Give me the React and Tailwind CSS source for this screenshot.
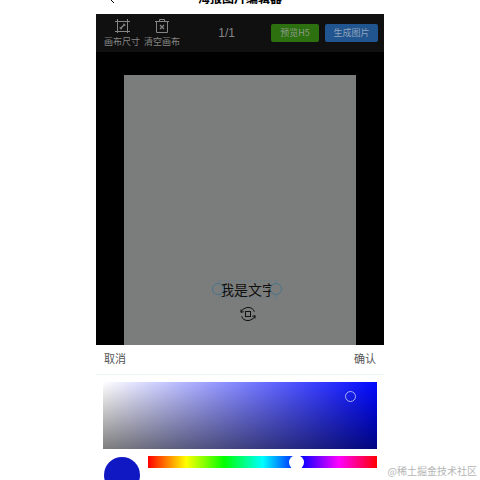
import React, { useState } from 'react';

const CropIcon = () => (
  <svg className="h-4 w-4" viewBox="0 0 16 16" fill="none" stroke="currentColor" aria-hidden="true">
    <path d="M3.5 1v14M13.5 1v14M1 3.5h15M1 13.5h15" />
    <path d="M6.5 10.5l4-4" strokeWidth="1.3" />
    <path d="M9 6.2h1.8V8M6.2 9v1.8H8" />
  </svg>
);

const ClearIcon = () => (
  <svg className="h-4 w-4" viewBox="0 0 16 16" fill="none" stroke="currentColor" aria-hidden="true">
    <path d="M2.5 3.5h11v11h-11zM1 3.5h14M5.5 3.5v-2h5v2" />
    <path d="M6 7l4 4M10 7l-4 4" strokeWidth="1.3" />
  </svg>
);

const RotateIcon = () => (
  <svg className="h-4 w-4" viewBox="0 0 16 16" fill="none" stroke="currentColor" aria-hidden="true">
    <path d="M4 2.8C6.5 1 9.5 1 12 2.5c1.3.9 2 2 2.3 3.3M12 13.2c-2.5 1.8-5.5 1.8-8 .3-1.3-.9-2-2-2.3-3.3" />
    <path d="M1 6.3C1.4 4.5 2.5 3.5 4 2.8M1 3.5v2.8l2.8-.6M15 9.7c-.4 1.8-1.5 2.8-3 3.5M15 12.5V9.7l-2.8.6" />
    <rect x="5.5" y="5.5" width="5" height="5" />
  </svg>
);

const Toolbar = () => (
  <div className="flex h-[38px] shrink-0 items-center bg-[#101010] pl-2 pr-1.5 text-[#858585]">
    <div className="flex flex-1 gap-1">
      <button type="button" className="flex flex-col items-center gap-0.5 whitespace-nowrap text-[9px] leading-3">
        <CropIcon />
        画布尺寸
      </button>
      <button type="button" className="flex flex-col items-center gap-0.5 whitespace-nowrap text-[9px] leading-3">
        <ClearIcon />
        清空画布
      </button>
    </div>
    <span className="pr-9 font-['Liberation_Sans',sans-serif] text-xs">1/1</span>
    <div className="flex justify-end gap-1.5 text-[9px] text-[#8f9b8b]">
      <button type="button" className="h-[18px] w-12 whitespace-nowrap rounded-xs bg-[#2c700f]">
        预览H5
      </button>
      <button type="button" className="h-[18px] w-[53px] whitespace-nowrap rounded-xs bg-[#215590] text-[#8fa3ba]">
        生成图片
      </button>
    </div>
  </div>
);

const Canvas = () => (
  <div className="h-[293px] shrink-0 bg-black px-7 pt-[23px]">
    <div className="flex h-full flex-col items-center bg-[#7b7d7c] pt-[205px] text-[#101010]">
      <div className="relative ml-4 border border-dashed border-[#6a7d86] text-sm leading-4">
        我是文字
        <span className="absolute -left-2 top-0.5 h-3 w-3 rounded-full border border-[#48748c] bg-[#7b7d7c]" />
        <span className="absolute -right-1.5 top-0.5 h-3 w-3 rounded-full border border-[#48748c] bg-[#7b7d7c]" />
      </div>
      <button type="button" aria-label="旋转" className="ml-4 mt-2">
        <RotateIcon />
      </button>
    </div>
  </div>
);

const ColorPicker = () => {
  const [hue, setHue] = useState(238);

  return (
    <div className="shrink-0 bg-white">
      <div className="flex h-[30px] items-center justify-between border-b border-[#edf2f2] px-2 pb-0.5 text-[11px] text-[#555]">
        <button type="button">取消</button>
        <button type="button">确认</button>
      </div>
      <div className="p-[7px]">
        <div className="relative h-[67px] bg-[linear-gradient(to_right,#fff,#0008ff)]">
          <div className="h-full bg-[linear-gradient(to_bottom,transparent,rgba(0,0,0,0.5))]" />
          <span className="absolute right-[21px] top-[9px] h-[11px] w-[11px] rounded-full border border-[#aab0f5]" />
        </div>
        <div className="mt-[7px] flex items-start gap-2">
          <span className="mt-px ml-px h-9 w-9 shrink-0 rounded-full bg-[#1018c4]" />
          <input
            type="range"
            min="0"
            max="360"
            value={hue}
            onChange={(e) => setHue(Number(e.target.value))}
            aria-label="色相"
            className="h-3 min-w-0 flex-1 appearance-none bg-[linear-gradient(to_right,#f00,#ff0,#0f0,#0ff,#00f,#f0f,#f00)] [&::-webkit-slider-thumb]:h-[15px] [&::-webkit-slider-thumb]:w-[15px] [&::-webkit-slider-thumb]:appearance-none [&::-webkit-slider-thumb]:rounded-full [&::-webkit-slider-thumb]:bg-white"
          />
        </div>
      </div>
    </div>
  );
};

const App = () => {
  return (
    <div className="relative h-screen overflow-hidden bg-white font-['Noto_Sans_CJK_SC',sans-serif]">
      <main className="mx-auto flex h-full w-3/5 flex-col">
        <header className="flex h-3.5 shrink-0 items-end justify-center overflow-hidden pb-2 text-black">
          <button type="button" aria-label="返回" className="w-8 shrink-0 pl-3">
            <svg className="h-3 w-2" viewBox="0 0 8 12" fill="none" stroke="currentColor" aria-hidden="true">
              <path d="M6 0L1.5 4.5 6 9" />
            </svg>
          </button>
          <h1 className="flex-1 pr-8 text-center text-xs font-bold">海报图片编辑器</h1>
        </header>
        <Toolbar />
        <Canvas />
        <ColorPicker />
      </main>
      <p className="absolute bottom-px right-[3px] text-[10px] leading-4 text-[#b5b5b5]">@稀土掘金技术社区</p>
    </div>
  );
};

export default App;
